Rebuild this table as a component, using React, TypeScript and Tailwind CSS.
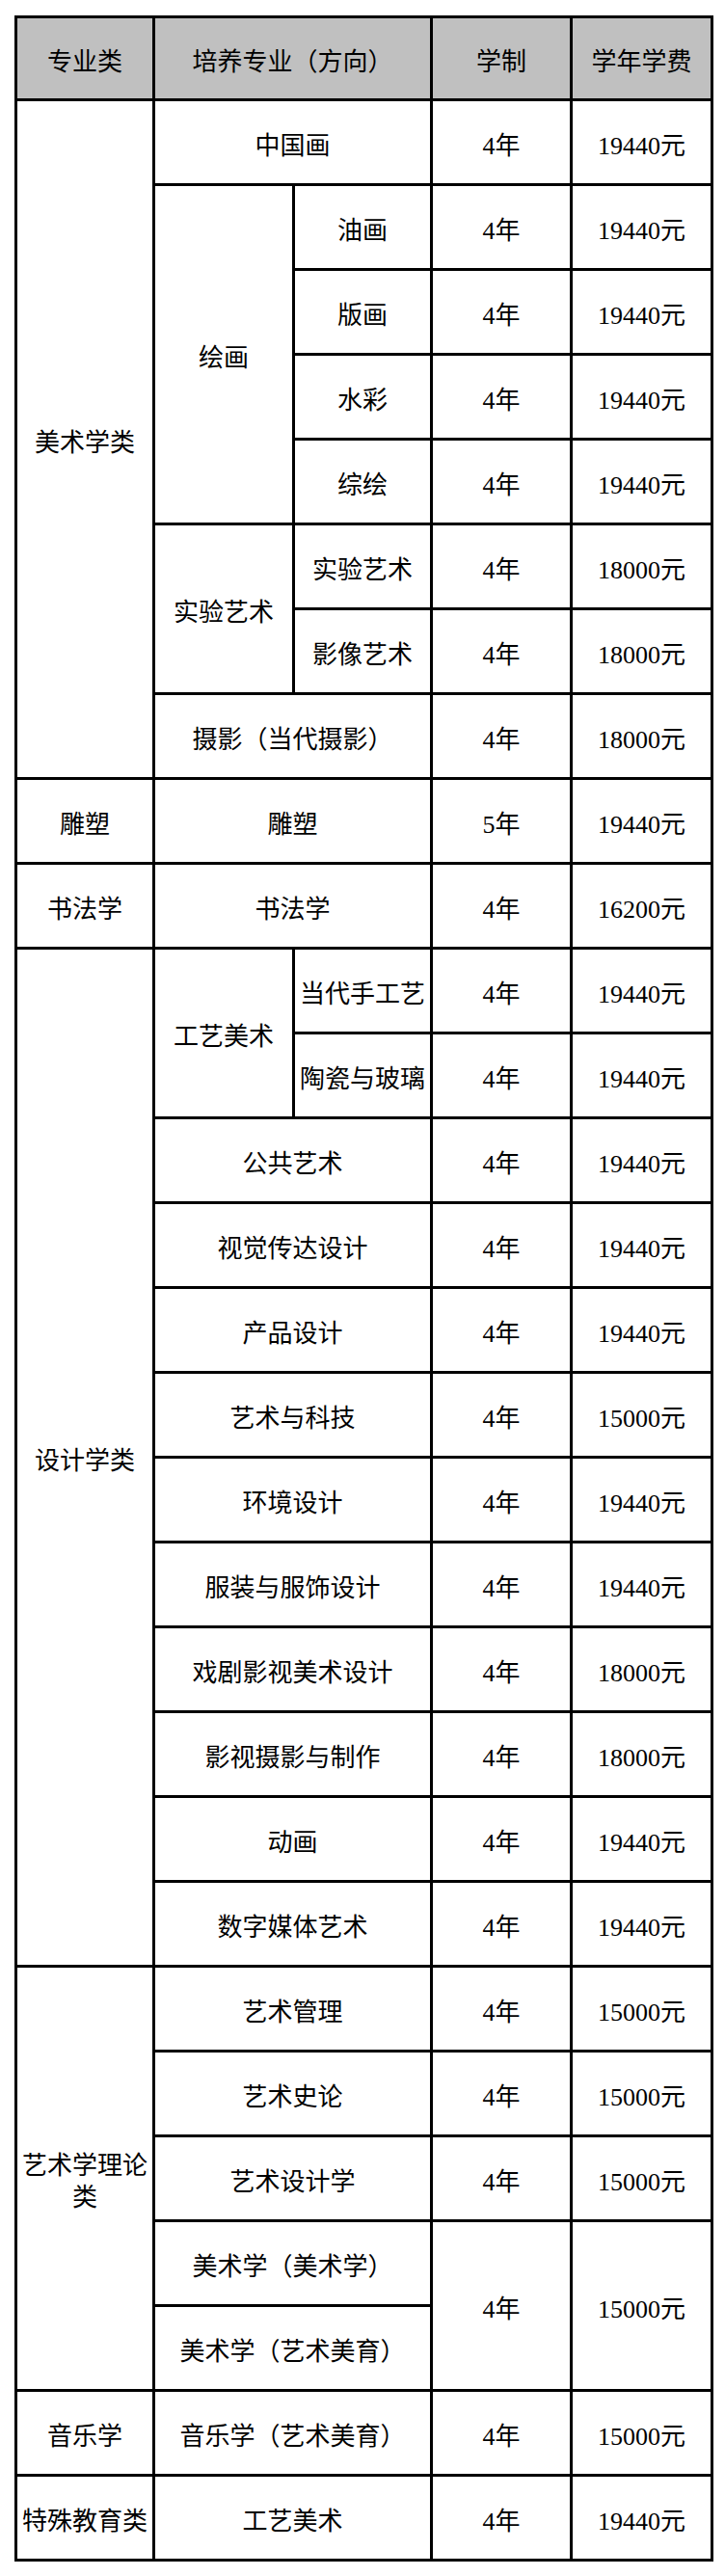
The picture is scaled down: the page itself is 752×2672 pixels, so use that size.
// Tuition table for art majors: category / programme (direction) / years / yearly fee

type Cell = {
  text: string
  rowSpan?: number
  colSpan?: number
}

const ROWS: Cell[][] = [
  [{ text: '美术学类', rowSpan: 8 }, { text: '中国画', colSpan: 2 }, { text: '4年' }, { text: '19440元' }],
  [{ text: '绘画', rowSpan: 4 }, { text: '油画' }, { text: '4年' }, { text: '19440元' }],
  [{ text: '版画' }, { text: '4年' }, { text: '19440元' }],
  [{ text: '水彩' }, { text: '4年' }, { text: '19440元' }],
  [{ text: '综绘' }, { text: '4年' }, { text: '19440元' }],
  [{ text: '实验艺术', rowSpan: 2 }, { text: '实验艺术' }, { text: '4年' }, { text: '18000元' }],
  [{ text: '影像艺术' }, { text: '4年' }, { text: '18000元' }],
  [{ text: '摄影（当代摄影）', colSpan: 2 }, { text: '4年' }, { text: '18000元' }],
  [{ text: '雕塑' }, { text: '雕塑', colSpan: 2 }, { text: '5年' }, { text: '19440元' }],
  [{ text: '书法学' }, { text: '书法学', colSpan: 2 }, { text: '4年' }, { text: '16200元' }],
  [{ text: '设计学类', rowSpan: 12 }, { text: '工艺美术', rowSpan: 2 }, { text: '当代手工艺' }, { text: '4年' }, { text: '19440元' }],
  [{ text: '陶瓷与玻璃' }, { text: '4年' }, { text: '19440元' }],
  [{ text: '公共艺术', colSpan: 2 }, { text: '4年' }, { text: '19440元' }],
  [{ text: '视觉传达设计', colSpan: 2 }, { text: '4年' }, { text: '19440元' }],
  [{ text: '产品设计', colSpan: 2 }, { text: '4年' }, { text: '19440元' }],
  [{ text: '艺术与科技', colSpan: 2 }, { text: '4年' }, { text: '15000元' }],
  [{ text: '环境设计', colSpan: 2 }, { text: '4年' }, { text: '19440元' }],
  [{ text: '服装与服饰设计', colSpan: 2 }, { text: '4年' }, { text: '19440元' }],
  [{ text: '戏剧影视美术设计', colSpan: 2 }, { text: '4年' }, { text: '18000元' }],
  [{ text: '影视摄影与制作', colSpan: 2 }, { text: '4年' }, { text: '18000元' }],
  [{ text: '动画', colSpan: 2 }, { text: '4年' }, { text: '19440元' }],
  [{ text: '数字媒体艺术', colSpan: 2 }, { text: '4年' }, { text: '19440元' }],
  [{ text: '艺术学理论类', rowSpan: 5 }, { text: '艺术管理', colSpan: 2 }, { text: '4年' }, { text: '15000元' }],
  [{ text: '艺术史论', colSpan: 2 }, { text: '4年' }, { text: '15000元' }],
  [{ text: '艺术设计学', colSpan: 2 }, { text: '4年' }, { text: '15000元' }],
  [{ text: '美术学（美术学）', colSpan: 2 }, { text: '4年', rowSpan: 2 }, { text: '15000元', rowSpan: 2 }],
  [{ text: '美术学（艺术美育）', colSpan: 2 }],
  [{ text: '音乐学' }, { text: '音乐学（艺术美育）', colSpan: 2 }, { text: '4年' }, { text: '15000元' }],
  [{ text: '特殊教育类' }, { text: '工艺美术', colSpan: 2 }, { text: '4年' }, { text: '19440元' }],
]

// glyphs in the source sit a few px below the cell's middle
const cellClass = 'border-[3px] border-black px-0 pt-[7px] pb-0 text-center align-middle leading-[33px]'

export default function App() {
  return (
    <div
      className="min-h-[2672px] bg-white pt-[16px] pl-[15px] text-black"
      style={{ fontFamily: '"Liberation Serif", "Noto Sans CJK SC", serif' }}
    >
      <table className="w-[722px] table-fixed border-collapse text-[26px]">
        <colgroup>
          <col className="w-[143px]" />
          <col className="w-[145px]" />
          <col className="w-[143px]" />
          <col className="w-[145px]" />
          <col className="w-[146px]" />
        </colgroup>
        <thead>
          <tr className="h-[86px] bg-[#c0c0c0]">
            <th className={`${cellClass} font-normal`}>专业类</th>
            <th className={`${cellClass} font-normal`} colSpan={2}>培养专业（方向）</th>
            <th className={`${cellClass} font-normal`}>学制</th>
            <th className={`${cellClass} font-normal`}>学年学费</th>
          </tr>
        </thead>
        <tbody>
          {ROWS.map((row, i) => (
            <tr key={i} className="h-[88px]">
              {row.map((cell, j) => (
                <td key={j} className={cellClass} rowSpan={cell.rowSpan} colSpan={cell.colSpan}>
                  {cell.text}
                </td>
              ))}
            </tr>
          ))}
        </tbody>
      </table>
    </div>
  )
}
